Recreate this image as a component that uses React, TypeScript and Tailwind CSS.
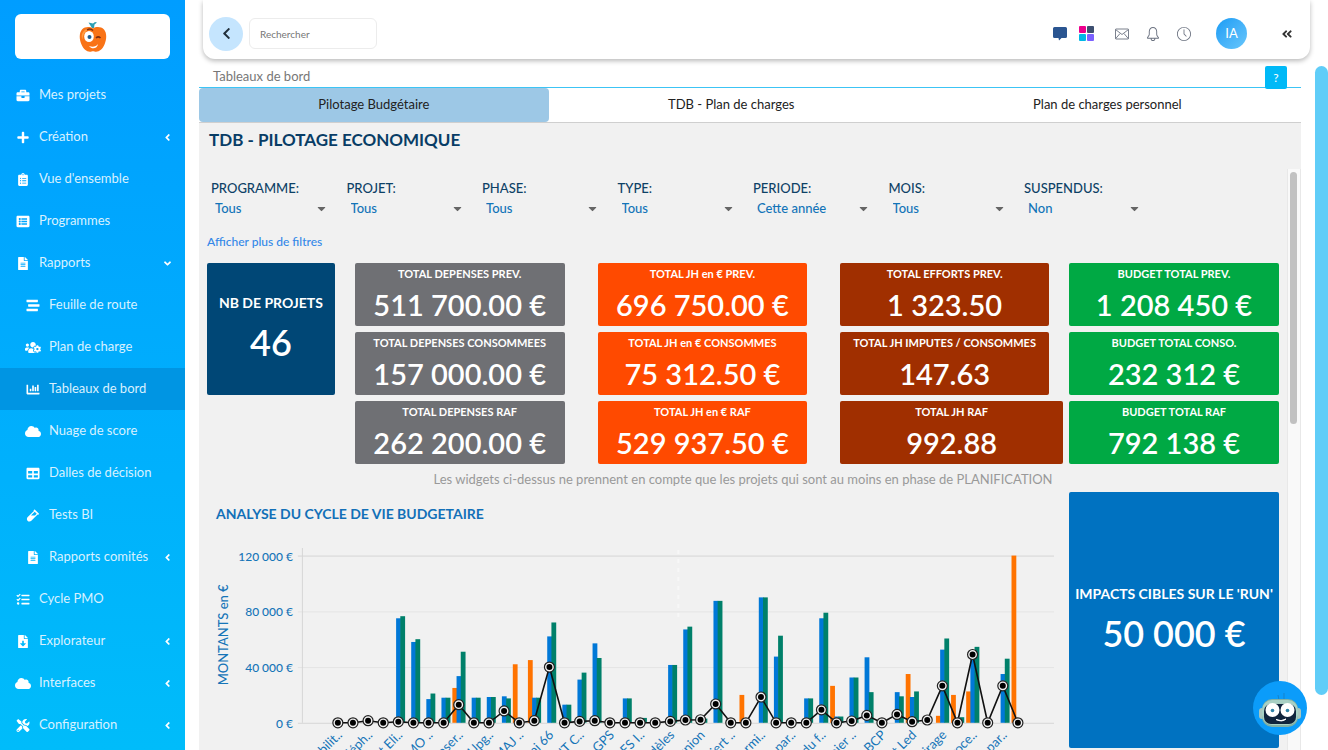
import React from "react";
import {
  FaAngleDoubleLeft,
  FaAngleDown,
  FaAngleLeft,
  FaBriefcase,
  FaCaretDown,
  FaChartBar,
  FaChevronLeft,
  FaClipboardList,
  FaCloud,
  FaFileAlt,
  FaFileDownload,
  FaListAlt,
  FaPlus,
  FaStream,
  FaTable,
  FaTasks,
  FaTools,
  FaUsersCog,
  FaVial,
} from "react-icons/fa";
import { SlBell, SlClock } from "react-icons/sl";

const menu = [
  { label: "Mes projets", icon: FaBriefcase },
  { label: "Création", icon: FaPlus, arrow: "left" },
  { label: "Vue d'ensemble", icon: FaClipboardList },
  { label: "Programmes", icon: FaListAlt },
  { label: "Rapports", icon: FaFileAlt, arrow: "down" },
  { label: "Feuille de route", icon: FaStream, sub: true },
  { label: "Plan de charge", icon: FaUsersCog, sub: true },
  { label: "Tableaux de bord", icon: FaChartBar, sub: true, active: true },
  { label: "Nuage de score", icon: FaCloud, sub: true },
  { label: "Dalles de décision", icon: FaTable, sub: true },
  { label: "Tests BI", icon: FaVial, sub: true },
  { label: "Rapports comités", icon: FaFileAlt, sub: true, arrow: "left" },
  { label: "Cycle PMO", icon: FaTasks },
  { label: "Explorateur", icon: FaFileDownload, arrow: "left" },
  { label: "Interfaces", icon: FaCloud, arrow: "left" },
  { label: "Configuration", icon: FaTools, arrow: "left" },
];

const filters = [
  { id: "programme", label: "PROGRAMME:", value: "Tous" },
  { id: "projet", label: "PROJET:", value: "Tous" },
  { id: "phase", label: "PHASE:", value: "Tous" },
  { id: "type", label: "TYPE:", value: "Tous" },
  { id: "periode", label: "PERIODE:", value: "Cette année" },
  { id: "mois", label: "MOIS:", value: "Tous" },
  { id: "suspendus", label: "SUSPENDUS:", value: "Non" },
];

// One entry per project, in thousands of euros: [orange, blue, green, line]
const projects = [
  [0, 0, 0, 0],
  [0, 0, 0, 0],
  [0, 0, 0, 1.5],
  [0, 0, 0, 0],
  [0, 75, 76.5, 0.7],
  [0, 58, 60, 0],
  [0, 17, 21, 0],
  [0, 18, 18, 0],
  [25, 33.5, 51, 13],
  [0, 18, 18, 0],
  [0, 18.5, 18.5, 0],
  [0, 19, 17.5, 8.5],
  [42, 0, 0, 0],
  [45, 18, 18, 1.5],
  [0, 62, 72, 40],
  [0, 13, 13, 0],
  [0, 31, 36, 1],
  [0, 57, 46.5, 1.5],
  [0, 0, 0, 0],
  [0, 17.5, 17.5, 0],
  [0, 0, 3.5, 0],
  [0, 0, 0, 0],
  [0, 41.5, 41.5, 1],
  [0, 67, 69, 2],
  [0, 0, 3, 2.2],
  [0, 87.5, 87.5, 13.5],
  [0, 0, 0, 0],
  [20, 0, 0, 0],
  [0, 90, 90, 18.5],
  [0, 47.5, 62.5, 0],
  [0, 0, 0, 0],
  [0, 17.5, 17.5, 0],
  [0, 75, 79, 9.3],
  [26.5, 4.5, 4.5, 0],
  [0, 32.5, 32.5, 1.3],
  [0, 47, 22, 5.3],
  [0, 0, 0, 0],
  [0, 22, 19, 6],
  [35, 18.5, 22.5, 0.8],
  [0, 0, 0, 2],
  [5, 52.5, 60.5, 26.5],
  [20, 0, 4, 0],
  [22.5, 48, 54.5, 49],
  [0, 0, 0, 0],
  [0, 35, 46, 26.5],
  [120, 0, 0, 0],
];

// Every second project has a label
const labels = [
  "bilit..",
  "léph..",
  "t Eli..",
  "MO ..",
  "aser..",
  "Upg..",
  "MAJ ..",
  "ai 66",
  "NT C..",
  "r GPS",
  "ES I..",
  "dèles",
  "union",
  "iert ..",
  "ermi..",
  "s par..",
  "du f..",
  "nier ..",
  "a BCP",
  "t Led",
  "irage",
  "roce..",
  "s par..",
];

const STEP = 15.13;
const ZERO = 183;
const px = (i: number) => 131 + i * STEP;
const height = (value: number) => value * 1.395;

const BudgetChart = () => {
  const line = projects
    .map((p, i) => `${px(i)},${ZERO - height(p[3])}`)
    .join(" ");

  return (
    <svg
      viewBox="0 0 863 240"
      className="block w-full text-[12px]"
      role="img"
      aria-label="Analyse du cycle de vie budgétaire"
    >
      {[0, 40, 80, 120].map((v) => (
        <g key={v}>
          <line
            x1={91}
            x2={848}
            y1={ZERO - height(v) + 0.5}
            y2={ZERO - height(v) + 0.5}
            stroke={v === 0 || v === 120 ? "#d6d6d6" : "#e4e4e4"}
          />
          <text
            x={86}
            y={ZERO - height(v) + 5}
            textAnchor="end"
            fill="#1675b8"
            fontWeight={500}
          >
            {v === 0 ? "0 €" : `${v} 000 €`}
          </text>
        </g>
      ))}
      <line x1={95.5} x2={95.5} y1={8} y2={ZERO} stroke="#d6d6d6" />
      <line
        x1={472}
        x2={472}
        y1={10}
        y2={78}
        stroke="#f7f7f7"
        strokeWidth={2}
        strokeDasharray="4 5"
      />
      <text
        transform="translate(21 95) rotate(-90)"
        textAnchor="middle"
        fill="#1675b8"
        fontWeight={500}
        fontSize={13}
      >
        MONTANTS en €
      </text>

      {projects.map(([orange, blue, green], i) => (
        <g key={i}>
          <rect
            x={px(i) - 6.4}
            y={ZERO - height(orange)}
            width={4.8}
            height={height(orange)}
            fill="#ff7300"
          />
          <rect
            x={px(i) - 2.2}
            y={ZERO - height(blue)}
            width={4.8}
            height={height(blue)}
            fill="#0078d7"
          />
          <rect
            x={px(i) + 2}
            y={ZERO - height(green)}
            width={4.8}
            height={height(green)}
            fill="#00806a"
          />
        </g>
      ))}

      <polyline points={line} fill="none" stroke="#111" strokeWidth={1.6} />
      {projects.map((p, i) => (
        <g key={i}>
          <circle
            cx={px(i)}
            cy={ZERO - height(p[3])}
            r={5}
            fill="#f1f1f1"
            stroke="#222"
            strokeWidth={1.2}
          />
          <circle cx={px(i)} cy={ZERO - height(p[3])} r={3} fill="#000" />
        </g>
      ))}

      {labels.map((label, i) => (
        <text
          key={i}
          transform={`translate(${px(i * 2) + 5} 196) rotate(-45)`}
          textAnchor="end"
          fill="#1675b8"
          fontSize={13}
        >
          {label}
        </text>
      ))}
    </svg>
  );
};

const Kpi = ({
  label,
  value,
  className,
}: {
  label: string;
  value: string;
  className: string;
}) => (
  <div
    className={`flex h-[63px] flex-col items-center rounded-xs pt-px text-white ${className}`}
  >
    <p className="text-[11px] leading-5 font-bold whitespace-nowrap">{label}</p>
    <p className="pt-0.5 text-[29px] leading-[38px] font-semibold whitespace-nowrap">
      {value}
    </p>
  </div>
);

const AppleLogo = () => (
  <svg viewBox="0 0 28 34" className="h-[34px] w-7" aria-label="Logo">
    <path d="M13 8 9.500 2.500l4.500 1L16 2l2 .5-2.500 2L15 8z" fill="#2b9fb5" />
    <path
      d="M14 8.500C17 6.500 22 6.500 25 9.500c3 3.500 2.800 10 .5 15-2 5-6 8-10 7-1-.3-2-.3-3 0-4 1-8-2-10-7C.2 19.500 0 13 3 9.500c3-3 8-3 11-1z"
      fill="#f97316"
    />
    <path d="M4 12c2-3 5-4 8-3.500-5 1.500-8 5-8.500 11-1.200-2.500-1-5.500.5-7.500z" fill="#ff9d42" />
    <ellipse cx="10" cy="16.500" rx="4.800" ry="5.500" fill="#fff" />
    <circle cx="10.500" cy="17" r="2" fill="#1e5a8c" />
    <path d="M8 10c2-1.500 4-1.500 6 .5" stroke="#7c2d12" strokeWidth="1.500" fill="none" />
    <path d="M17 18c1.500-1.500 3-1.500 4.500 0" stroke="#7c2d12" strokeWidth="1.500" fill="none" />
    <path d="M10 26c4 1.500 7 .5 9-2-.5 4.500-6 6-9 2z" fill="#fff" />
  </svg>
);

const Robot = () => (
  <svg viewBox="0 0 54 54" className="size-[54px]" aria-hidden="true">
    <path d="M26 19l-1-5M31 19v-7" stroke="#1483cc" strokeWidth="1" />
    <rect x="6" y="27" width="42" height="11" rx="3" fill="#a9c6bd" />
    <rect x="9" y="18" width="36" height="28" rx="10" fill="#7fb0a5" />
    <rect x="9" y="19" width="36" height="25" rx="10" fill="#a8d0c4" />
    <rect x="11" y="23" width="32" height="20" rx="7" fill="#10243c" />
    <circle cx="19.500" cy="29" r="7" fill="#fff" />
    <circle cx="34.500" cy="29" r="7" fill="#fff" />
    <circle cx="19.500" cy="29.500" r="1.800" fill="#2c82a8" />
    <circle cx="34.500" cy="29.500" r="1.800" fill="#2c82a8" />
    <path d="M23 38.500q5 2.500 10-.5-4 3.500-10 .5z" stroke="#fff" fill="#fff" />
  </svg>
);

const Sidebar = () => (
  <nav className="w-[185px] shrink-0 overflow-hidden bg-linear-to-b from-[#009dff] to-[#00bcfa] pt-3.5 text-white">
    <div className="mx-[15px] mb-[15px] flex h-[45px] items-center justify-center rounded-md bg-white">
      <AppleLogo />
    </div>
    <ul>
      {menu.map(({ label, icon: Icon, sub, active, arrow }) => (
        <li key={label}>
          <a
            href="#"
            className={`flex h-[42px] items-center pr-3 ${sub ? "pl-[25px]" : "pl-[15px]"} ${active ? "bg-[#0095e3]" : ""}`}
          >
            <span className="flex w-4 justify-center">
              <Icon className="h-[13px] w-4" />
            </span>
            <span className="flex-1 pl-2 text-[13px] text-[#d8f1ff] whitespace-nowrap">
              {label}
            </span>
            {arrow === "left" && <FaAngleLeft className="size-[11px]" />}
            {arrow === "down" && <FaAngleDown className="size-[11px]" />}
          </a>
        </li>
      ))}
    </ul>
  </nav>
);

const Header = () => (
  <header className="mr-[18px] ml-[18px] flex h-[59px] shrink-0 items-center rounded-b-xl bg-white pt-2 pr-[17px] pl-1.5 shadow-[0_2px_5px_rgba(0,0,0,0.28)]">
    <button
      aria-label="Retour"
      className="flex size-[34px] items-center justify-center rounded-full bg-[#c5e5fe] text-[#22303c]"
    >
      <FaChevronLeft className="size-[13px]" />
    </button>
    <input
      aria-label="Rechercher"
      placeholder="Rechercher"
      className="ml-1.5 h-[31px] w-[128px] rounded-md border border-[#ececec] px-2.5 text-[10px] placeholder:text-[#777]"
    />
    <div className="ml-auto flex items-center text-[#6b7280]">
      <button aria-label="Messages">
        <svg viewBox="0 0 14 14" className="size-3.5" fill="#2a5591">
          <path d="M1.500 0h11A1.500 1.500 0 0 1 14 1.500v8a1.500 1.500 0 0 1-1.500 1.500H8.500L6 13.500 5.500 11h-4A1.500 1.500 0 0 1 0 9.500v-8A1.500 1.500 0 0 1 1.500 0z" />
        </svg>
      </button>
      <button aria-label="Applications" className="ml-3">
        <svg viewBox="0 0 15 15" className="size-[15px]">
          <rect width="7" height="7" rx="1" fill="#ec008c" />
          <rect x="8" width="7" height="7" rx="1" fill="#3d4f70" />
          <rect y="8" width="7" height="7" rx="1" fill="#00b8e6" />
          <rect x="8" y="8" width="7" height="7" rx="1" fill="#7b61ff" />
        </svg>
      </button>
      <button aria-label="Courrier" className="ml-[21px]">
        <svg
          viewBox="0 0 14 12"
          className="h-3 w-3.5"
          fill="none"
          stroke="currentColor"
          strokeWidth="0.900"
        >
          <rect x="0.500" y="1" width="13" height="10" rx="0.500" />
          <path d="m.5 1.500 6.500 5 6.500-5M.5 10.800 5 5.500M13.500 10.800 9 5.500" />
        </svg>
      </button>
      <button aria-label="Notifications" className="ml-[17px]">
        <SlBell className="size-3.5" />
      </button>
      <button aria-label="Historique" className="ml-[17px]">
        <SlClock className="size-3.5" />
      </button>
      <button className="ml-[25px] size-[31px] rounded-full bg-linear-to-br from-[#119cf5] to-[#66c6fb] text-[13px] text-white">
        IA
      </button>
      <button aria-label="Replier" className="ml-[34px] text-[#333]">
        <FaAngleDoubleLeft className="size-3" />
      </button>
    </div>
  </header>
);

const Dashboard = () => (
  <section className="flex flex-1 flex-col overflow-hidden bg-[#f1f1f1]">
    <h1 className="h-[46px] shrink-0 pl-2.5 text-[17px] leading-[34px] font-bold text-[#083d66]">
      TDB - PILOTAGE ECONOMIQUE
    </h1>

    <div className="flex flex-1 overflow-hidden">
      <div className="min-w-0 flex-1 pt-[9px] pr-2 pl-2">
        <div className="-mr-3 grid grid-cols-8">
          {filters.map(({ id, label, value }) => (
            <div key={id} className="pl-1">
              <label
                htmlFor={id}
                className="block text-[13px] leading-5 font-medium text-[#0d4166]"
              >
                {label}
              </label>
              <div className="flex items-center">
                <select
                  id={id}
                  className="h-5 w-[104px] appearance-none bg-transparent pl-1 text-[13px] leading-5 font-medium text-[#1374b8]"
                >
                  <option>{value}</option>
                </select>
                <FaCaretDown className="size-[13px] text-[#666]" />
              </div>
            </div>
          ))}
        </div>
        <a
          href="#"
          className="mt-3.5 mb-[11px] block text-[12px] leading-5 font-medium text-[#3388e8]"
        >
          Afficher plus de filtres
        </a>

        <div className="grid grid-cols-[148fr_243fr_243fr_229fr_210px]">
          <div className="pr-5">
            <div className="flex h-[132px] flex-col items-center justify-center rounded-xs bg-[#004776] text-white">
              <p className="text-[14px] leading-5 font-bold">NB DE PROJETS</p>
              <p className="pt-1.5 text-[36px] leading-[46px] font-semibold">46</p>
            </div>
          </div>
          <div className="flex flex-col gap-1.5 pr-[33px]">
            <Kpi className="bg-[#6f7074]" label="TOTAL DEPENSES PREV." value="511 700.00 €" />
            <Kpi className="bg-[#6f7074]" label="TOTAL DEPENSES CONSOMMEES" value="157 000.00 €" />
            <Kpi className="bg-[#6f7074]" label="TOTAL DEPENSES RAF" value="262 200.00 €" />
          </div>
          <div className="flex flex-col gap-1.5 pr-[33px]">
            <Kpi className="bg-[#ff4a00]" label="TOTAL JH en € PREV." value="696 750.00 €" />
            <Kpi className="bg-[#ff4a00]" label="TOTAL JH en € CONSOMMES" value="75 312.50 €" />
            <Kpi className="bg-[#ff4a00]" label="TOTAL JH en € RAF" value="529 937.50 €" />
          </div>
          <div className="flex flex-col gap-1.5 pr-1.5">
            <Kpi className="mr-3.5 bg-[#a02f00]" label="TOTAL EFFORTS PREV." value="1 323.50" />
            <Kpi className="mr-3.5 bg-[#a02f00]" label="TOTAL JH IMPUTES / CONSOMMES" value="147.63" />
            <Kpi className="bg-[#a02f00]" label="TOTAL JH RAF" value="992.88" />
          </div>
          <div className="flex flex-col gap-1.5">
            <Kpi className="bg-[#00a944]" label="BUDGET TOTAL PREV." value="1 208 450 €" />
            <Kpi className="bg-[#00a944]" label="BUDGET TOTAL CONSO." value="232 312 €" />
            <Kpi className="bg-[#00a944]" label="BUDGET TOTAL RAF" value="792 138 €" />
          </div>
        </div>

        <p className="h-7 text-center text-[13px] leading-[30px] text-[#999]">
          Les widgets ci-dessus ne prennent en compte que les projets qui sont
          au moins en phase de PLANIFICATION
        </p>

        <div className="flex items-start">
          <div className="min-w-0 flex-1">
            <h2 className="h-12 pt-3 pl-[9px] text-[14px] leading-5 font-bold text-[#1270b8]">
              ANALYSE DU CYCLE DE VIE BUDGETAIRE
            </h2>
            <BudgetChart />
          </div>
          <div className="flex h-64 w-[210px] flex-col items-center justify-center rounded-xs bg-[#0072c1] text-white">
            <p className="text-[14px] leading-5 font-bold whitespace-nowrap">
              IMPACTS CIBLES SUR LE 'RUN'
            </p>
            <p className="pt-1.5 text-[36px] leading-[46px] font-semibold">
              50 000 €
            </p>
          </div>
        </div>
      </div>

      {/* Inner scroll track */}
      <div className="w-3.5 shrink-0 border-x border-[#e8e8e8] bg-[#f9f9f9] pt-[3px] pl-0.5">
        <div className="h-[252px] w-[7px] rounded-full bg-[#c1c1c1]" />
      </div>
    </div>
  </section>
);

const App = () => {
  return (
    <div className="flex h-screen overflow-hidden bg-white font-[Lato,sans-serif]">
      <Sidebar />

      <main className="flex min-w-0 flex-1 flex-col">
        <Header />
        <div className="flex min-h-0 flex-1">
          <div className="ml-3.5 flex min-w-0 flex-1 flex-col pt-[7px]">
            <div className="flex h-[22px] shrink-0 items-start justify-between border-b border-b-[#3cc4f5] pr-3.5 pl-3.5">
              <span className="text-[13px] leading-5 text-[#777]">
                Tableaux de bord
              </span>
              <button className="h-[23px] w-[22px] shrink-0 rounded-xs bg-[#00b9f7] text-[12px] text-white">
                ?
              </button>
            </div>

            <div className="flex h-[35px] shrink-0 border-b border-[#cfcfcf] text-[13px] text-[#222]">
              <button className="flex-auto rounded-sm bg-[#9dc8e6]">
                Pilotage Budgétaire
              </button>
              <button className="flex-auto">TDB - Plan de charges</button>
              <button className="flex-auto">Plan de charges personnel</button>
            </div>

            <Dashboard />
          </div>

          {/* Page scrollbar */}
          <div className="ml-3.5 w-[13px] pt-[7px]">
            <div className="h-[92%] rounded-full bg-[#60cdf8]" />
          </div>
        </div>
      </main>

      <button
        aria-label="Assistant"
        className="fixed right-[21px] bottom-[15px] rounded-full bg-[#0b9cfa]"
      >
        <Robot />
      </button>
    </div>
  );
};

export default App;
